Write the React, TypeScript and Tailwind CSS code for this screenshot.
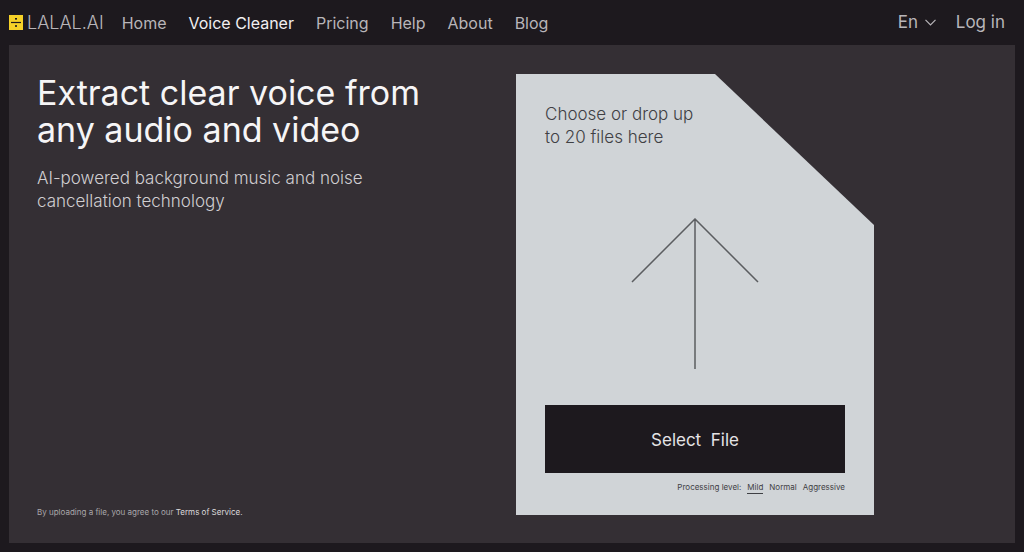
import { useRef, useState } from "react";

const links = ["Home", "Voice Cleaner", "Pricing", "Help", "About", "Blog"];
const levels = ["Mild", "Normal", "Aggressive"];

function Logo() {
  return (
    <a href="#" className="flex items-center gap-1 text-lg font-light text-[#b8b5b9]">
      <svg width="14" height="15" viewBox="0 0 14 15" aria-hidden="true">
        <rect width="14" height="15" fill="#f5d128" />
        <path d="M2 7.5h10" stroke="#1d191e" strokeWidth="1.2" />
        <rect x="6" y="3" width="2" height="1.6" fill="#1d191e" />
        <rect x="6" y="10.2" width="2" height="1.6" fill="#1d191e" />
      </svg>
      LALAL.AI
    </a>
  );
}

function Header() {
  return (
    <header className="flex h-[45px] items-center justify-between pr-[10px] text-[17px] text-[#b8b5b9]">
      <div className="flex items-center gap-[18px]">
        <Logo />
        <nav className="flex items-center gap-[22px] text-base">
          {links.map((link) => (
            <a key={link} href="#" className={link === "Voice Cleaner" ? "text-[#f1eff1]" : ""}>
              {link}
            </a>
          ))}
        </nav>
      </div>
      <div className="flex items-center gap-5">
        <div className="flex items-center gap-[6px]">
          <select aria-label="Language" className="appearance-none bg-transparent">
            <option>En</option>
          </select>
          <svg width="11" height="7" viewBox="0 0 11 7" fill="none" stroke="currentColor" strokeWidth="1.2" aria-hidden="true">
            <path d="M.5 .8l5 5 5-5" />
          </svg>
        </div>
        <a href="#">Log in</a>
      </div>
    </header>
  );
}

function UploadCard() {
  const fileRef = useRef<HTMLInputElement>(null);
  const [level, setLevel] = useState("Mild");

  return (
    <section className="flex w-full max-w-[358px] flex-col bg-[#d0d4d7] px-[29px] pt-[29px] pb-[21px] text-[#3f4044] [clip-path:polygon(0_0,calc(100%-159px)_0,100%_151px,100%_100%,0_100%)]">
      <p className="text-[17px] leading-[23px] font-light">
        Choose or drop up
        <br />
        to 20 files here
      </p>
      <div className="flex flex-1 items-end justify-center pb-[35px]">
        <svg width="128" height="152" viewBox="0 0 128 152" fill="none" stroke="#5b5d60" strokeWidth="1.5" aria-hidden="true">
          <path d="M1 64L64 1l63 63M64 1v150" />
        </svg>
      </div>
      <input ref={fileRef} type="file" multiple hidden aria-label="Files" />
      <button
        type="button"
        onClick={() => fileRef.current?.click()}
        className="h-[68px] w-full bg-[#1d191e] pt-1 text-[17px] whitespace-pre text-[#e4e3e5]"
      >
        {"Select  File"}
      </button>
      <fieldset className="mt-2 flex items-start justify-end gap-[6px] text-[8px] leading-3">
        <span>Processing level:</span>
        {levels.map((item) => (
          <label key={item} className="cursor-pointer border-b border-transparent has-checked:border-[#3f4044]">
            <input
              type="radio"
              name="level"
              checked={level === item}
              onChange={() => setLevel(item)}
              className="sr-only"
            />
            {item}
          </label>
        ))}
      </fieldset>
    </section>
  );
}

export default function App() {
  return (
    <div className="flex min-h-screen flex-col bg-[#1d191e] px-[9px] pb-[9px] font-['Inter',sans-serif]">
      <Header />
      <main className="grid flex-1 grid-cols-2 gap-2 bg-[#342f34] px-7 pt-[29px] pb-7">
        <div className="flex flex-col justify-between">
          <div>
            <h1 className="text-[34px] leading-[37px] text-[#f6f5f6]">
              Extract clear voice from
              <br />
              any audio and video
            </h1>
            <p className="mt-[19px] text-[17px] leading-[23px] font-light text-[#d0ced1]">
              AI-powered background music and noise
              <br />
              cancellation technology
            </p>
          </div>
          <p className="text-[8px] leading-[6px] text-[#aaa8ab]">
            By uploading a file, you agree to our{" "}
            <a href="#" className="text-[#dddbdd]">
              Terms of Service.
            </a>
          </p>
        </div>
        <UploadCard />
      </main>
    </div>
  );
}
